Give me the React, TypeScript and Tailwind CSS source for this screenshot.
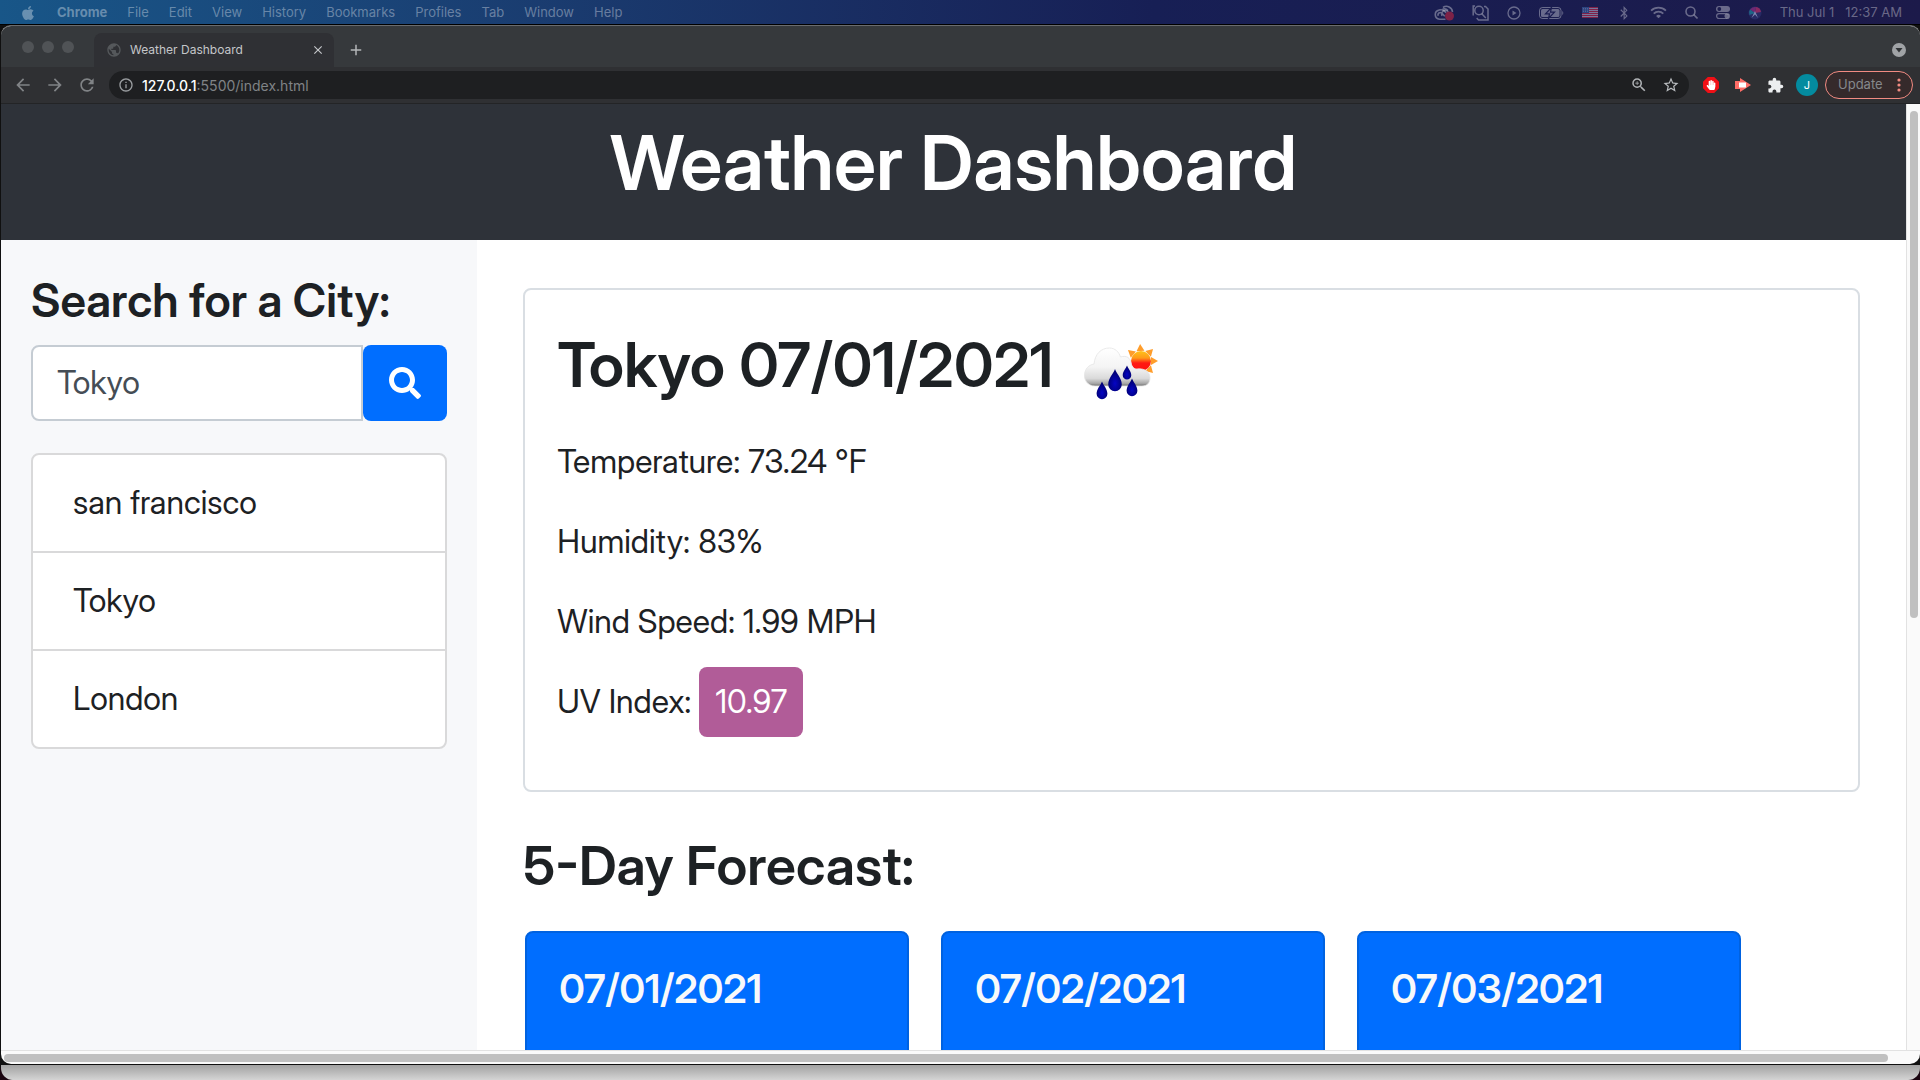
import React from "react";
import { FaApple, FaSearch, FaHandPaper, FaBluetoothB } from "react-icons/fa";
import {
  MdArrowBack,
  MdArrowForward,
  MdRefresh,
  MdInfoOutline,
  MdZoomIn,
  MdStarBorder,
  MdExtension,
  MdClose,
  MdAdd,
  MdPublic,
} from "react-icons/md";

const menus = ["File", "Edit", "View", "History", "Bookmarks", "Profiles", "Tab", "Window", "Help"];
const cities = ["san francisco", "Tokyo", "London"];
const readings = ["Temperature: 73.24 °F", "Humidity: 83%", "Wind Speed: 1.99 MPH"];
const days = ["07/01/2021", "07/02/2021", "07/03/2021"];

function CloudRecIcon() {
  return (
    <svg width="20" height="16" viewBox="0 0 20 16" fill="none" stroke="currentColor" strokeWidth="1.6">
      <path d="M5.500 14.200h6M18.500 7A6 6 0 0 0 9 2.500M14 5.500A5 5 0 0 0 8.500 4.300M5.500 14.200a4.600 4.600 0 0 1-.5-9.100A5.500 5.500 0 0 1 12 8" />
      <path d="M4.200 10.800a2.300 2.300 0 0 1 3.600-2.700l3 3.200M8 10.800A3.600 3.600 0 0 1 11 5.500a3.600 3.600 0 0 1 3.500 1.800" />
      <circle cx="15.500" cy="11" r="4.500" fill="#7d2247" stroke="none" />
    </svg>
  );
}

function DocSearchIcon() {
  return (
    <svg width="17" height="16" viewBox="0 0 17 16" fill="none" stroke="currentColor" strokeWidth="1.5">
      <circle cx="7" cy="5.500" r="4.200" />
      <path d="M9.800 8.800l4 4.200M3 1H1.200v9.500M12 1.500h1.500l2.500 2.500v11H6.500l-1.800-2" />
    </svg>
  );
}

function PlayIcon() {
  return (
    <svg width="14" height="14" viewBox="0 0 14 14" fill="none" stroke="currentColor" strokeWidth="1.300">
      <circle cx="7" cy="7" r="6" />
      <path d="M5.500 4.500v5l4-2.500z" fill="currentColor" stroke="none" />
    </svg>
  );
}

function BatteryIcon() {
  return (
    <svg width="25" height="12" viewBox="0 0 25 12">
      <rect x="0.500" y="0.500" width="21.500" height="11" rx="3" fill="none" stroke="currentColor" />
      <rect x="2" y="2" width="18.500" height="8" rx="1.500" fill="currentColor" />
      <path d="M12.500 0.500L6.500 6.800h4L9.500 11.500l6-6.300h-4z" fill="#65648e" stroke="#1b1e52" strokeWidth="1.200" />
      <path d="M23.300 4v4c1.300-.5 1.300-3.500 0-4z" fill="currentColor" />
    </svg>
  );
}

function FlagIcon() {
  return (
    <svg width="16" height="11" viewBox="0 0 16 11">
      <rect width="16" height="11" fill="#77769c" />
      {[0, 2, 4, 6, 8, 10].map((y) => (
        <rect key={y} y={y} width="16" height="1" fill="#7f2148" />
      ))}
      <rect width="7" height="6" fill="#2c4480" />
      <path d="M1 1.500h5M1 3h5M1 4.500h5" stroke="#77769c" strokeWidth=".6" strokeDasharray="1 1" />
    </svg>
  );
}

function WifiIcon() {
  return (
    <svg width="17" height="13" viewBox="0 0 16 12" fill="none" stroke="currentColor" strokeWidth="1.700">
      <path d="M1 4.300a10 10 0 0 1 14 0M3.500 7a6.400 6.400 0 0 1 9 0" />
      <path d="M8 11.500L5.700 9.200a3.300 3.300 0 0 1 4.600 0z" fill="currentColor" stroke="none" />
    </svg>
  );
}

function LensIcon() {
  return (
    <svg width="13" height="13" viewBox="0 0 13 13" fill="none" stroke="currentColor" strokeWidth="1.600">
      <circle cx="5.500" cy="5.500" r="4.500" />
      <path d="M8.800 8.800l3.700 3.700" />
    </svg>
  );
}

function ControlIcon() {
  return (
    <svg width="14" height="13" viewBox="0 0 14 13">
      <rect width="14" height="6" rx="3" fill="currentColor" />
      <circle cx="3.300" cy="3" r="1.900" fill="#1c1d4e" />
      <rect x=".6" y="7.600" width="12.800" height="5" rx="2.500" fill="none" stroke="currentColor" strokeWidth="1.200" />
      <circle cx="10.700" cy="10.100" r="2.300" fill="currentColor" />
    </svg>
  );
}

function SiriIcon() {
  return (
    <svg width="14" height="14" viewBox="0 0 14 14">
      <circle cx="7" cy="7" r="6.500" fill="#272a64" />
      <path d="M7 7L2 3.500A6 6 0 0 1 8 1z" fill="#6f2873" />
      <path d="M7 7l1-6a6 6 0 0 1 5 5z" fill="#8a2a62" />
      <path d="M7 7l-5.500 2A6 6 0 0 1 2 3.500z" fill="#1f6687" />
      <path d="M7 5l3 7-3-3.500L3.500 12z" fill="#7a86b0" />
    </svg>
  );
}

function RainSunIcon() {
  const drop = "M0-8C1-5 4.500-2 4.500 2.300a4.500 4.500 0 0 1-9 0C-4.500-2-1-5 0-8z";
  return (
    <svg className="mt-2" width="84" height="64" viewBox="0 0 84 64" aria-label="Rain with sun" role="img">
      <defs>
        <linearGradient id="sun" x1="0" y1="0" x2="0" y2="1">
          <stop offset="0" stopColor="#ffc21a" />
          <stop offset=".35" stopColor="#ff9a1a" />
          <stop offset=".6" stopColor="#ff1a12" />
          <stop offset="1" stopColor="#ff1010" />
        </linearGradient>
        <linearGradient id="cloud" x1="0" y1="0" x2="0" y2="1">
          <stop offset="0" stopColor="#ffffff" />
          <stop offset=".5" stopColor="#f4f4f4" />
          <stop offset=".8" stopColor="#dadada" />
          <stop offset=".93" stopColor="#a8a8a8" />
          <stop offset="1" stopColor="#707070" />
        </linearGradient>
        <radialGradient id="drop" cx=".5" cy=".65" r=".5">
          <stop offset="0" stopColor="#0505c4" />
          <stop offset="1" stopColor="#000078" />
        </radialGradient>
      </defs>
      <g transform="translate(64 24)">
        {[-140, -93, -45, 0, 45].map((a) => (
          <path key={a} d="M10-4l7 4-7 4z" fill="#ff9d2b" transform={`rotate(${a})`} />
        ))}
        <circle r="10" fill="url(#sun)" />
      </g>
      <path
        d="M18 49C10 49 7 42 7.500 38c.3-6 4-10 9.500-11 1-10 7-16 15.500-16C38 11 42 15 43.500 20c6-2 10 1 10.500 6 1 5 3 6 6 6 8-1 13 3 13 9 0 5-3 8-8 8z"
        fill="url(#cloud)"
        stroke="#e4e4e4"
        strokeWidth=".8"
      />
      <g fill="url(#drop)">
        <path d={drop} transform="translate(38 44) scale(1.500)" />
        <path d={drop} transform="translate(50 36) scale(.950)" />
        <path d={drop} transform="translate(25 54) scale(1.200)" />
        <path d={drop} transform="translate(55 51) scale(1.200)" />
      </g>
    </svg>
  );
}

function MenuBar() {
  return (
    <div className="flex h-6 shrink-0 items-center bg-linear-to-r from-[#185688] via-[#171f55] via-60% to-[#1c1a4a] pt-px pr-[18px] pl-5 text-[13px] text-white/35">
      <FaApple className="mr-[21px] size-4" />
      <nav className="flex items-center gap-5">
        <span className="font-bold">Chrome</span>
        {menus.map((m) => (
          <span key={m}>{m}</span>
        ))}
      </nav>
      <div className="ml-auto flex items-center gap-[18px]">
        <CloudRecIcon />
        <DocSearchIcon />
        <PlayIcon />
        <BatteryIcon />
        <FlagIcon />
        <FaBluetoothB className="h-[14px] w-4" />
        <WifiIcon />
        <LensIcon />
        <ControlIcon />
        <SiriIcon />
        <span className="whitespace-pre">Thu Jul 1   12:37 AM</span>
      </div>
    </div>
  );
}

function TabStrip() {
  return (
    <div className="flex h-[41px] shrink-0 items-end bg-[#36393c]">
      <div className="flex w-[93px] gap-2 self-center pl-[21px]">
        <span className="size-3 rounded-full bg-[#505356]" />
        <span className="size-3 rounded-full bg-[#505356]" />
        <span className="size-3 rounded-full bg-[#505356]" />
      </div>
      <div className="flex h-[34px] w-60 items-center rounded-t-lg bg-[#2f3034] pr-[9px] pl-3 text-[12px] text-[#c4c6c9]">
        <MdPublic className="mr-2 size-4 text-[#55585b]" />
        <span className="flex-1">Weather Dashboard</span>
        <button aria-label="Close tab">
          <MdClose className="size-[14px]" />
        </button>
      </div>
      <button aria-label="New tab" className="flex h-[34px] w-11 items-center justify-center text-[#b4b6b8]">
        <MdAdd className="size-[18px]" />
      </button>
      <button aria-label="Search tabs" className="mr-[14px] mb-[10px] ml-auto flex size-[14px] items-center justify-center rounded-full bg-[#a0a3a6]">
        <svg width="8" height="6" viewBox="0 0 8 6">
          <path d="M.5 1h7L4 5.500z" fill="#303336" />
        </svg>
      </button>
    </div>
  );
}

function Toolbar() {
  return (
    <div className="flex h-[37px] shrink-0 items-center border-b border-[#232426] bg-[#2f3033] pr-[7px] pl-3 text-[#808386]">
      <div className="flex items-center gap-3 pr-3">
        <button aria-label="Back">
          <MdArrowBack className="size-5" />
        </button>
        <button aria-label="Forward">
          <MdArrowForward className="size-5" />
        </button>
        <button aria-label="Reload">
          <MdRefresh className="size-5" />
        </button>
      </div>
      <div className="flex h-7 flex-1 items-center rounded-full bg-[#1e1f21] px-[9px] text-[14px]">
        <MdInfoOutline className="mr-2 size-4 text-[#9a9da0]" />
        <span className="flex-1">
          <span className="font-medium text-white">127.0.0.1</span>:5500/index.html
        </span>
        <MdZoomIn className="mr-[14px] size-[18px] text-[#b0b3b6]" />
        <MdStarBorder className="size-[18px] text-[#b8bbbe]" />
      </div>
      <div className="flex items-center gap-4 pl-[14px]">
        <span className="flex size-4 items-center justify-center bg-[#f01016] [clip-path:polygon(30%_0,70%_0,100%_30%,100%_70%,70%_100%,30%_100%,0_70%,0_30%)]">
          <FaHandPaper className="size-[10px] text-white" />
        </span>
        <svg width="16" height="14" viewBox="0 0 16 14">
          <path d="M0 3h5V0l11 7-11 7v-3H0z" fill="#ff6d67" />
          <path d="M4 4.500h7v5H4z" fill="#fff" />
        </svg>
        <MdExtension className="size-[17px] text-[#eceef0]" />
      </div>
      <span className="mr-[7px] ml-3 flex size-[22px] items-center justify-center rounded-full bg-[#048b9f] text-[11px] text-white">J</span>
      <button className="flex h-7 w-[88px] items-center justify-between rounded-full border border-[#f28b82] bg-[#352a2b] pr-[11px] pl-3 text-[13px] text-[#85888b]">
        Update
        <svg width="4" height="14" viewBox="0 0 4 14" fill="#f28b82">
          <circle cx="2" cy="2" r="1.600" />
          <circle cx="2" cy="7" r="1.600" />
          <circle cx="2" cy="12" r="1.600" />
        </svg>
      </button>
    </div>
  );
}

function Sidebar() {
  return (
    <aside className="w-1/4 shrink-0 bg-[#f7f8fa] px-[30px] pt-8">
      <h2 className="mb-4 text-[46px] leading-[57px] font-semibold whitespace-nowrap">
        <label htmlFor="city">Search for a City:</label>
      </h2>
      <form className="mb-8 flex h-[76px]" onSubmit={(e) => e.preventDefault()}>
        <input
          id="city"
          defaultValue="Tokyo"
          className="min-w-0 flex-1 rounded-l-lg border-2 border-[#c5ccd3] bg-white px-6 text-[32px] text-[#454d55] outline-none"
        />
        <button aria-label="Search" className="flex w-[84px] items-center justify-center rounded-lg bg-[#006eff] text-white">
          <FaSearch className="size-8" />
        </button>
      </form>
      <ul className="divide-y-2 divide-[#d9d9da] rounded-lg border-2 border-[#d9d9da] bg-white">
        {cities.map((c) => (
          <li key={c} className="px-10 py-6 leading-[48px]">
            {c}
          </li>
        ))}
      </ul>
    </aside>
  );
}

function Weather() {
  return (
    <main className="min-w-0 flex-1 px-[46px] pt-12">
      <section className="mb-10 rounded-lg border-2 border-[#d9dee3] px-8 pt-9 pb-8">
        <h3 className="mb-[35px] flex h-[77px] items-center gap-6 text-[62px] leading-[77px] font-semibold">
          Tokyo 07/01/2021
          <RainSunIcon />
        </h3>
        {readings.map((r) => (
          <p key={r} className="mb-8">
            {r}
          </p>
        ))}
        <p className="mb-8 h-12">
          UV Index: <span className="-my-[11px] inline-block rounded-lg bg-[#b15c98] px-4 leading-[70px] text-white">10.97</span>
        </p>
      </section>
      <h3 className="mb-8 text-[54px] leading-[67px] font-semibold">5-Day Forecast:</h3>
      <div className="flex gap-8 pl-[2px]">
        {days.map((d) => (
          <article key={d} className="h-80 w-96 shrink-0 rounded-lg border-2 border-[#0062e0] bg-[#006eff] p-8">
            <h5 className="text-[40px] leading-[48px] font-semibold text-[#f8f9fa]">{d}</h5>
          </article>
        ))}
      </div>
    </main>
  );
}

export default function App() {
  return (
    <div className="flex h-screen flex-col overflow-hidden bg-[#1a0510] font-['Inter',sans-serif]">
      <MenuBar />
      <div className="flex min-h-0 flex-1 flex-col rounded-b-2xl border-t border-black bg-linear-to-b from-[#101010] via-[#101010] via-99% to-[#cfcfcf] pl-px">
        <div className="flex min-h-0 flex-1 flex-col overflow-hidden rounded-[10px] border-t border-[#6a6c6e] bg-[#fafafa]">
          <div className="flex shrink-0 flex-col">
            <TabStrip />
            <Toolbar />
          </div>
          <div className="flex min-h-0 flex-1 font-['Inter_Display','Inter',sans-serif] text-[32px] leading-[48px] text-[#1d2124]">
            <div className="min-w-0 flex-1 overflow-hidden bg-white">
              <header className="bg-[#2e3239] pt-[10px] pb-[30px] text-center">
                <h1 className="text-[76px] leading-[96px] font-semibold text-white">Weather Dashboard</h1>
              </header>
              <div className="flex min-h-full">
                <Sidebar />
                <Weather />
              </div>
            </div>
            <div className="w-[14px] shrink-0 border-l border-[#e2e2e2] pt-[7px] pl-[3px]">
              <div className="h-[54%] w-2 rounded-full bg-[#c0c0c0]" />
            </div>
          </div>
          <div className="h-[14px] shrink-0 border-t border-[#e2e2e2] pt-[3px] pr-8 pl-[3px]">
            <div className="h-2 rounded-full bg-[#c0c0c0]" />
          </div>
        </div>
        <div className="h-4 shrink-0 rounded-b-xl border-t border-[#101010] bg-linear-to-b from-[#a2a2a2] to-[#d4d4d4]" />
      </div>
    </div>
  );
}
